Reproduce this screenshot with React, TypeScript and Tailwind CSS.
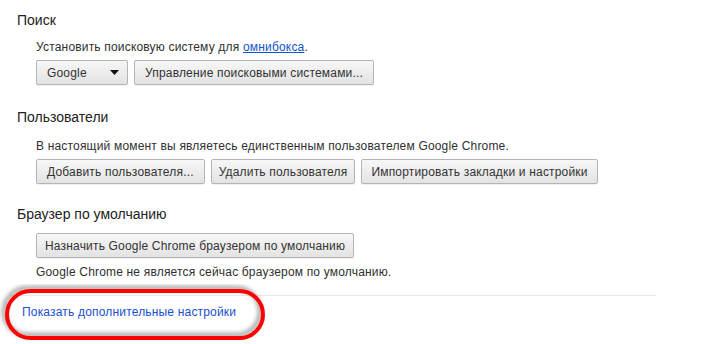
import React from "react";

function Btn({ children, className = "" }: { children: React.ReactNode; className?: string }) {
  return (
    <button
      className={`h-[25px] rounded-[2px] border border-[#b4b4b4] bg-gradient-to-b from-[#f7f7f7] to-[#e3e3e3] text-[12px] text-[#333] leading-none tracking-[0.18px] shadow-[0_1px_0_rgba(0,0,0,0.06)] flex items-center ${className}`}
    >
      {children}
    </button>
  );
}

function Heading({ children, className = "" }: { children: React.ReactNode; className?: string }) {
  return <h2 className={`pl-[17px] text-[14px] leading-[20px] text-[#222] ${className}`}>{children}</h2>;
}

function Text({ children, className = "" }: { children: React.ReactNode; className?: string }) {
  return (
    <p className={`pl-[36px] text-[12px] leading-[16px] tracking-[0.18px] text-[#303030] ${className}`}>{children}</p>
  );
}

export default function App() {
  return (
    <div className="relative w-[701px] h-[344px] bg-white overflow-hidden font-['Liberation_Sans',Arial,sans-serif]">
      <div className="flex flex-col pt-[10px]">
        <Heading>Поиск</Heading>
        <Text className="mt-[9px]">
          Установить поисковую систему для{" "}
          <a className="text-[#1155cc] underline">омнибокса</a>.
        </Text>
        <div className="flex gap-[6px] pl-[36px] mt-[5px]">
          <Btn className="w-[92px] px-[10px] justify-between">
            <span>Google</span>
            <svg width="9" height="5" viewBox="0 0 9 5" className="mr-[-2px]">
              <path d="M0 0h9L4.5 5z" fill="#111" />
            </svg>
          </Btn>
          <Btn className="px-[10px]">Управление поисковыми системами...</Btn>
        </div>

        <Heading className="mt-[22px]">Пользователи</Heading>
        <Text className="mt-[11px]">
          В настоящий момент вы являетесь единственным пользователем Google Chrome.
        </Text>
        <div className="flex gap-[6px] pl-[36px] mt-[5px]">
          <Btn className="px-[10px]">Добавить пользователя...</Btn>
          <Btn className="px-[7px]">Удалить пользователя</Btn>
          <Btn className="px-[9px]">Импортировать закладки и настройки</Btn>
        </div>

        <Heading className="mt-[20px]">Браузер по умолчанию</Heading>
        <div className="flex pl-[36px] mt-[9px]">
          <Btn className="px-[8px]">Назначить Google Chrome браузером по умолчанию</Btn>
        </div>
        <Text className="mt-[6px]">Google Chrome не является сейчас браузером по умолчанию.</Text>

        <div className="ml-[10px] w-[646px] h-px bg-[#e8e8e8] mt-[15px]" />
        <a className="pl-[22px] mt-[8px] text-[12px] leading-[16px] tracking-[0.18px] text-[#1a4fd0]">
          Показать дополнительные настройки
        </a>
      </div>

      <svg className="absolute left-0 top-[284px]" width="280" height="60" viewBox="0 0 280 60">
        <defs>
          <filter id="sh" x="-10%" y="-30%" width="120%" height="160%">
            <feGaussianBlur stdDeviation="2" />
          </filter>
        </defs>
        <rect x="4" y="4" width="256" height="47" rx="23.5" fill="none" stroke="#8c8c8c" strokeWidth="4" filter="url(#sh)" opacity="0.85" />
        <rect x="7" y="7" width="256" height="47" rx="23.5" fill="none" stroke="#ff0000" strokeWidth="4" />
      </svg>
    </div>
  );
}
